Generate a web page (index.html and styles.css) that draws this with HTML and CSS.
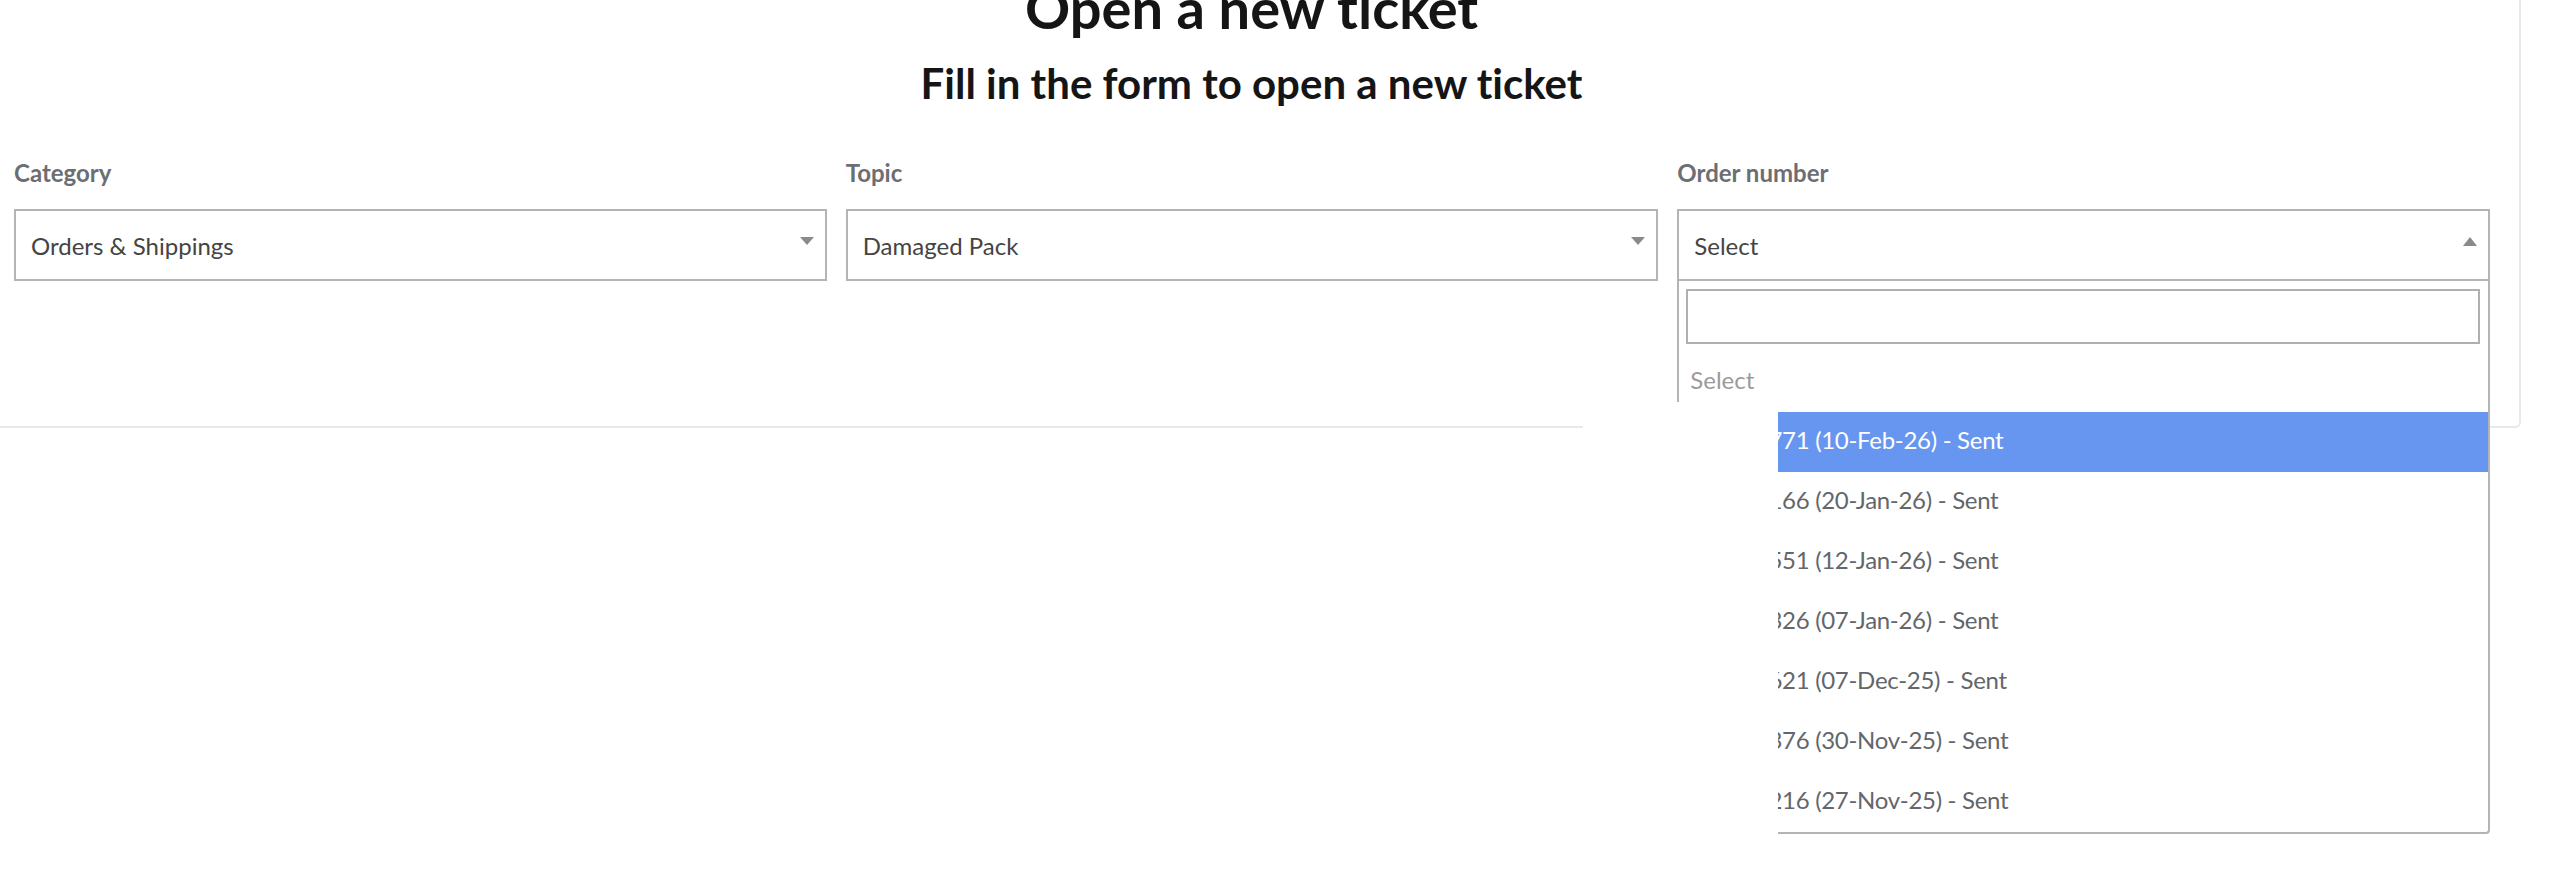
FILE: index.html
```html
<!DOCTYPE html>
<html lang="en">
<head>
<meta charset="utf-8">
<title>Open a new ticket</title>
<link rel="stylesheet" href="styles.css">
</head>
<body>
<div class="card">
  <h1 class="title">Open a new ticket</h1>
  <h2 class="subtitle">Fill in the form to open a new ticket</h2>
  <form class="form-row">
    <div class="field">
      <label class="label">Category</label>
      <div class="select-wrap">
        <div class="select"><span class="value">Orders &amp; Shippings</span><span class="arrow"></span></div>
      </div>
    </div>
    <div class="field">
      <label class="label">Topic</label>
      <div class="select-wrap">
        <div class="select"><span class="value">Damaged Pack</span><span class="arrow"></span></div>
      </div>
    </div>
    <div class="field">
      <label class="label">Order number</label>
      <div class="select-wrap">
        <div class="select open"><span class="value">Select</span><span class="arrow up"></span></div>
        <div class="dropdown">
          <input class="search-input" type="text">
          <ul class="options">
            <li class="opt placeholder">Select</li>
            <li class="opt order active">10249771 (10-Feb-26) - Sent</li>
            <li class="opt order">10248166 (20-Jan-26) - Sent</li>
            <li class="opt order">10246551 (12-Jan-26) - Sent</li>
            <li class="opt order">10245326 (07-Jan-26) - Sent</li>
            <li class="opt order">10241621 (07-Dec-25) - Sent</li>
            <li class="opt order">10240376 (30-Nov-25) - Sent</li>
            <li class="opt order">10239216 (27-Nov-25) - Sent</li>
          </ul>
        </div>
        <div class="mask"></div>
      </div>
    </div>
  </form>
</div>
</body>
</html>
```

FILE: styles.css
```css
html {
  margin: 0;
  padding: 0;
  background: #ffffff;
  overflow: hidden;
}

body {
  margin: 0;
  padding: 0;
  min-height: 889px;
  font-family: "Lato", "Open Sans", sans-serif;
  font-variant-ligatures: none;
  color: #151515;
}

.card {
  margin-left: -16px;
  width: 2537px;
  box-sizing: border-box;
  padding: 0 16px 145px;
  border-right: 2px solid #e9e9e9;
  border-bottom: 2px solid #e9e9e9;
  border-bottom-right-radius: 6px;
  text-align: center;
  background: #ffffff;
}

.title {
  margin: -26px 0 0;
  font-size: 56px;
  line-height: 67px;
  font-weight: 700;
  color: #151515;
}

.subtitle {
  margin: 17px 0 0;
  font-size: 42px;
  line-height: 50px;
  font-weight: 700;
  color: #151515;
}

.form-row {
  display: grid;
  grid-template-columns: repeat(3, 1fr);
  column-gap: 19px;
  margin: 50px 13px 0 14px;
  text-align: left;
}

.label {
  display: block;
  font-size: 24px;
  line-height: 29px;
  font-weight: 700;
  color: #6c6e73;
  margin-bottom: 22px;
}

.select-wrap {
  position: relative;
}

.select {
  display: flex;
  align-items: center;
  justify-content: space-between;
  height: 72px;
  box-sizing: border-box;
  border: 2px solid #b4b4b4;
  padding: 0 11px 0 15px;
  background: #ffffff;
  font-size: 24px;
  color: #444444;
}

.value {
  padding-top: 3px;
  line-height: 28.8px;
}

.arrow {
  width: 0;
  height: 0;
  border-left: 7px solid transparent;
  border-right: 7px solid transparent;
  border-top: 8px solid #8a8a8a;
  margin-bottom: 8px;
}

.arrow.up {
  border-top: 0;
  border-bottom: 9px solid #8a8a8a;
}

.dropdown {
  position: absolute;
  top: 72px;
  left: 0;
  right: 0;
  z-index: 2;
  background: #ffffff;
  border: 2px solid #b4b4b4;
  border-top: 0;
  border-bottom-left-radius: 4px;
  border-bottom-right-radius: 4px;
  padding: 8px 8px 0 7px;
}

.search-input {
  display: block;
  width: 100%;
  height: 55px;
  box-sizing: border-box;
  margin: 0;
  border: 2px solid #b0b0b0;
  background: #ffffff;
  font-family: "Lato", sans-serif;
  font-size: 24px;
  outline: none;
}

.options {
  list-style: none;
  margin: 8px -8px 0 -7px;
  padding: 0;
}

.opt {
  font-size: 24px;
  line-height: 56px;
  padding: 0 0 4px 11px;
  color: #63666b;
  white-space: nowrap;
}

.opt.placeholder {
  color: #9b9b9b;
}

.opt.order {
  padding-left: 21px;
  letter-spacing: -0.3px;
}

.opt.active {
  background: #6796f0;
  color: #ffffff;
}

.mask {
  position: absolute;
  left: -94px;
  top: 193px;
  width: 195px;
  height: 460px;
  background: #ffffff;
  z-index: 3;
}
```
